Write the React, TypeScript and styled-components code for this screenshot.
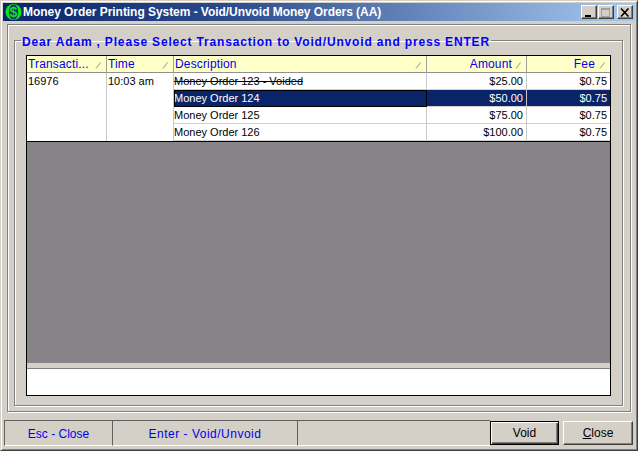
import React from "react";
import styled, { createGlobalStyle } from "styled-components";

const Global = createGlobalStyle`
  html, body { margin: 0; padding: 0; background: #d4d0c8; }
  body { font-family: "Liberation Sans", Arial, sans-serif; }
`;

const Win = styled.div`
  box-sizing: border-box;
  width: 638px;
  height: 451px;
  background: #d4d0c8;
  border: 1px solid;
  border-color: #d4d0c8 #404040 #404040 #d4d0c8;
  box-shadow: inset 1px 1px 0 #fff, inset -1px -1px 0 #808080;
  padding: 2px;
  display: flex;
  flex-direction: column;
  overflow: hidden;
`;

const TitleBar = styled.div`
  flex: none;
  height: 18px;
  display: flex;
  align-items: center;
  padding: 0 2px 0 2px;
  gap: 1px;
  background: linear-gradient(90deg, #0a246a 0%, #2a4a8c 35%, #a6caf0 100%);
`;

const Title = styled.span`
  flex: 1;
  color: #fff;
  font-size: 12px;
  font-weight: 700;
  letter-spacing: -0.05px;
  white-space: nowrap;
`;

const WinBtn = styled.button`
  box-sizing: border-box;
  width: 16px;
  height: 14px;
  margin: 0;
  padding: 0;
  background: #d4d0c8;
  border: 1px solid;
  border-color: #fff #404040 #404040 #fff;
  box-shadow: inset -1px -1px 0 #808080;
  display: flex;
  align-items: center;
  justify-content: center;
  &:last-child { margin-left: 2px; }
`;

const Frame = styled.div`
  flex: none;
  box-sizing: border-box;
  height: 388px;
  margin: 3px 0 0 4px;
  width: 624px;
  border: 1px solid #808080;
  box-shadow: 1px 1px 0 #fff, inset 1px 1px 0 #fff;
  padding: 6px 7px 5px 6px;
`;

const Group = styled.fieldset`
  box-sizing: border-box;
  height: 375px;
  margin: 0;
  padding: 0 11px 9px 11px;
  border: 1px solid #808080;
  box-shadow: 1px 1px 0 #fff, inset 1px 1px 0 #fff;
  min-width: 0;
`;

const Heading = styled.legend`
  padding: 4px 1px 0;
  margin-left: -5px;
  color: #0000ff;
  font-size: 12px;
  font-weight: 700;
  letter-spacing: 0.83px;
  line-height: 14px;
  white-space: nowrap;
`;

const Sheet = styled.div`
  box-sizing: border-box;
  width: 585px;
  height: 341px;
  margin-top: 6px;
  border: 1px solid #000;
  background: #fff;
  display: flex;
  flex-direction: column;
`;

const DataGrid = styled.div`
  flex: none;
  display: grid;
  grid-template-columns: 80px 67px 253px 100px 83px;
  grid-template-rows: repeat(5, 17px);
  height: 85px;
  border-bottom: 1px solid #000;
`;

const Head = styled.div<{ $pad?: number }>`
  box-sizing: border-box;
  position: relative;
  background: #ffffc8;
  color: #0000f0;
  font-size: 12px;
  letter-spacing: 0.15px;
  line-height: 16px;
  padding: 0 ${(p) => (p.$pad ? p.$pad + "px" : "1px")} 0 1px;
  text-align: ${(p) => (p.$pad ? "right" : "left")};
  border-right: 1px solid #a0a0a0;
  border-bottom: 1px solid #909090;
  white-space: nowrap;
  overflow: hidden;
  &:nth-child(5) { border-right: none; }
`;

const Sort = styled.svg`
  position: absolute;
  right: 5px;
  top: 6px;
`;

const Merged = styled.div`
  box-sizing: border-box;
  grid-row: span 4;
  font-size: 11px;
  line-height: 16px;
  padding: 0 1px;
  color: #000;
  border-right: 1px solid #c8c8c8;
`;

const Cell = styled.div<{ $right?: boolean; $sel?: boolean; $focus?: boolean; $void?: boolean; $end?: boolean }>`
  box-sizing: border-box;
  font-size: 11px;
  line-height: 16px;
  padding: 0 ${(p) => (p.$right ? "3px" : "0")} 0 0;
  text-align: ${(p) => (p.$right ? "right" : "left")};
  white-space: nowrap;
  color: ${(p) => (p.$sel ? "#fff" : "#000")};
  background: ${(p) => (p.$sel ? "#0a246a" : "#fff")};
  border-right: ${(p) => (p.$end ? "none" : "1px solid #c8c8c8")};
  border-bottom: 1px solid #d0d0d0;
  text-decoration: ${(p) => (p.$void ? "line-through" : "none")};
  ${(p) => (p.$focus ? "outline: 1px solid #000; outline-offset: -1px;" : "")}
`;

const GrayArea = styled.div`
  flex: none;
  height: 221px;
  background: #868487;
`;

const Strip = styled.div`
  flex: none;
  height: 6px;
  box-sizing: border-box;
  background: #d4d0c8;
  border-bottom: 1px solid #808080;
`;

const StatusBar = styled.div`
  flex: none;
  display: flex;
  height: 27px;
  margin: 8px 2px 0 1px;
`;

const StatusCell = styled.div<{ $w?: number; $grow?: boolean; $track?: number }>`
  box-sizing: border-box;
  width: ${(p) => (p.$w ? p.$w + "px" : "auto")};
  flex: ${(p) => (p.$grow ? "1" : "none")};
  border-top: 1px solid #606060;
  border-left: 1px solid #606060;
  border-bottom: 1px solid #fff;
  color: #0000f0;
  font-size: 12px;
  letter-spacing: ${(p) => p.$track ?? 0}px;
  display: flex;
  align-items: center;
  justify-content: center;
  padding-top: 1px;
  height: 26px;
`;

const Actions = styled.div`
  flex: none;
  display: flex;
  gap: 4px;
  padding: 1px 0 0 0;
`;

const Btn = styled.button<{ $def?: boolean }>`
  box-sizing: border-box;
  height: 24px;
  width: ${(p) => (p.$def ? "69px" : "70px")};
  margin: 0;
  padding: 0;
  background: #d4d0c8;
  color: #000;
  font: 12px "Liberation Sans", Arial, sans-serif;
  border: 1px solid;
  border-color: ${(p) => (p.$def ? "#000" : "#fff #404040 #404040 #fff")};
  box-shadow: ${(p) =>
    p.$def ? "inset 1px 1px 0 #fff, inset -1px -1px 0 #404040, inset -2px -2px 0 #808080" : "inset -1px -1px 0 #808080"};
  u { text-decoration: underline; }
`;

const SortMark = () => (
  <Sort width="6" height="7" viewBox="0 0 6 7">
    <path d="M5.5 0.5 L1 6.5" stroke="#909090" strokeWidth="1" fill="none" />
  </Sort>
);

const Logo = () => (
  <svg width="17" height="18" viewBox="0 0 17 18">
    <circle cx="8.5" cy="9" r="8" fill="#10e020" />
    <ellipse cx="8.5" cy="9" rx="4.6" ry="7.6" fill="#0a2a6a" />
    <text x="8.5" y="14" textAnchor="middle" fontFamily="Liberation Sans" fontWeight="700" fontSize="14" fill="#10e020">$</text>
  </svg>
);

const rows = [
  { d: "Money Order 123 - Voided", a: "$25.00", void: true },
  { d: "Money Order 124", a: "$50.00", sel: true },
  { d: "Money Order 125", a: "$75.00" },
  { d: "Money Order 126", a: "$100.00" },
];

export default function App() {
  return (
    <Win>
      <Global />
      <TitleBar>
        <Logo />
        <Title>Money Order Printing System - Void/Unvoid Money Orders (AA)</Title>
        <WinBtn aria-label="Minimize">
          <svg width="10" height="9" viewBox="0 0 10 9"><rect x="1" y="7" width="6" height="2" fill="#000" /></svg>
        </WinBtn>
        <WinBtn aria-label="Maximize">
          <svg width="10" height="9" viewBox="0 0 10 9"><rect x="0.5" y="0.5" width="8" height="8" fill="none" stroke="#a0a0a0" /><rect x="0" y="0" width="9" height="2" fill="#a0a0a0" /></svg>
        </WinBtn>
        <WinBtn aria-label="Close window">
          <svg width="10" height="9" viewBox="0 0 10 9"><path d="M1 0.5 L8.5 8.5 M8.5 0.5 L1 8.5" stroke="#000" strokeWidth="1.6" fill="none" /></svg>
        </WinBtn>
      </TitleBar>
      <Frame>
        <Group>
          <Heading>Dear Adam , Please Select Transaction to Void/Unvoid and press ENTER</Heading>
          <Sheet>
            <DataGrid>
              <Head>Transacti...<SortMark /></Head>
              <Head>Time<SortMark /></Head>
              <Head>Description<SortMark /></Head>
              <Head $pad={14}>Amount<SortMark /></Head>
              <Head $pad={15}>Fee<SortMark /></Head>
              {rows.map((r, i) => (
                <React.Fragment key={r.d}>
                  {i === 0 && <Merged>16976</Merged>}
                  {i === 0 && <Merged>10:03 am</Merged>}
                  <Cell $void={r.void} $sel={r.sel} $focus={r.sel}>{r.d}</Cell>
                  <Cell $right $sel={r.sel}>{r.a}</Cell>
                  <Cell $right $end $sel={r.sel}>$0.75</Cell>
                </React.Fragment>
              ))}
            </DataGrid>
            <GrayArea />
            <Strip />
          </Sheet>
        </Group>
      </Frame>
      <StatusBar>
        <StatusCell $w={108} $track={0}>Esc - Close</StatusCell>
        <StatusCell $w={185} $track={0.5}>Enter - Void/Unvoid</StatusCell>
        <StatusCell $grow />
        <Actions>
          <Btn $def>Void</Btn>
          <Btn><u>C</u>lose</Btn>
        </Actions>
      </StatusBar>
    </Win>
  );
}
